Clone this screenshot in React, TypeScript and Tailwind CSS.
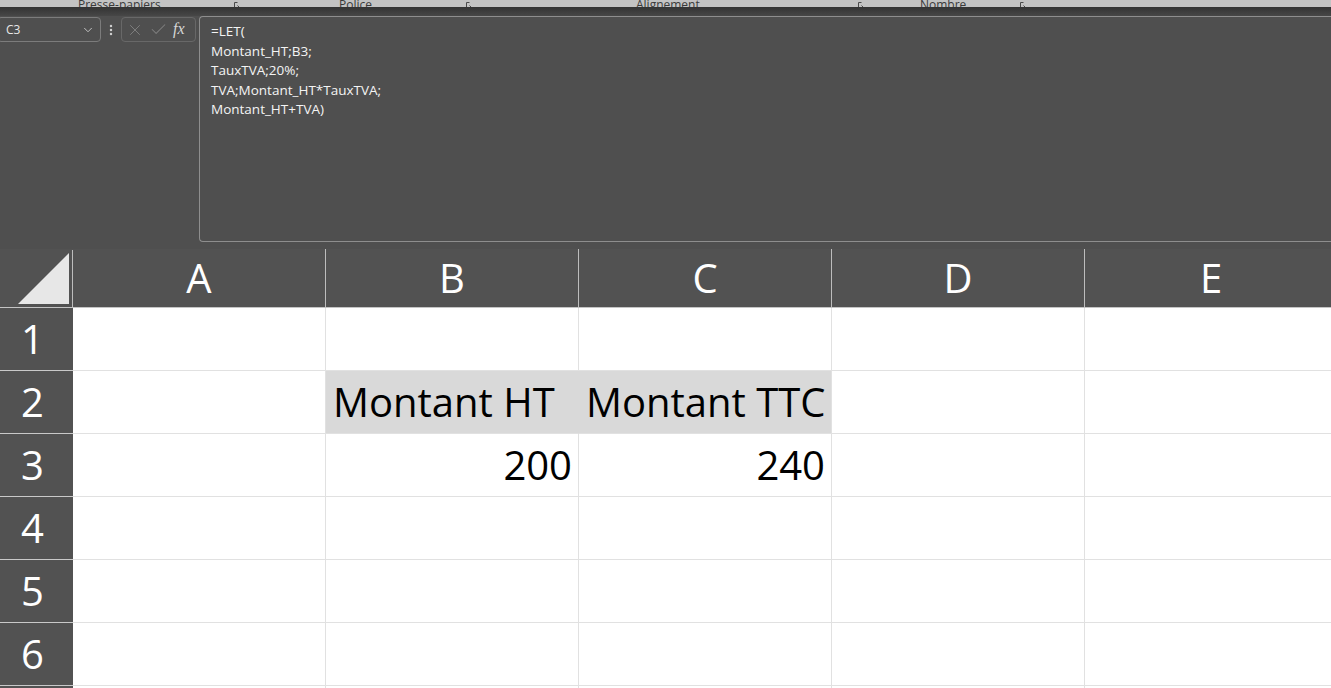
import { ChevronDown, EllipsisVertical, X, Check } from 'lucide-react';

const cols = ['A', 'B', 'C', 'D', 'E'];
const rows = [1, 2, 3, 4, 5, 6, 7];

const formula = ['=LET(', 'Montant_HT;B3;', 'TauxTVA;20%;', 'TVA;Montant_HT*TauxTVA;', 'Montant_HT+TVA)'];

// contenu des cellules
const cells: Record<string, { text: string; align: 'left' | 'right'; fill?: boolean }> = {
  B2: { text: 'Montant HT', align: 'left', fill: true },
  C2: { text: 'Montant TTC', align: 'left', fill: true },
  B3: { text: '200', align: 'right' },
  C3: { text: '240', align: 'right' },
};

function Launcher() {
  return (
    <svg width="11" height="11" viewBox="0 0 11 11" fill="none" stroke="#4a4a4a" strokeWidth="1">
      <path d="M1.5 1.5v8h8V6.5M1.5 1.5h3" />
      <path d="M4.5 4.5l4.5 4.5M9 6v3H6" />
    </svg>
  );
}

function Ribbon() {
  return (
    <div className="h-[7px] overflow-hidden bg-[#c3c3c3] flex items-end text-[12px] leading-[12px] text-[#3a3a3a] [font-family:'Open_Sans',sans-serif]">
      <span className="ml-[78px] w-[76px] shrink-0 whitespace-nowrap translate-y-[4px]">Presse-papiers</span>
      <span className="ml-[79px] shrink-0 translate-y-[5px]"><Launcher /></span>
      <span className="ml-[95px] w-[34px] shrink-0 whitespace-nowrap translate-y-[4px]">Police</span>
      <span className="ml-[92px] shrink-0 translate-y-[5px]"><Launcher /></span>
      <span className="ml-[160px] w-[62px] shrink-0 whitespace-nowrap translate-y-[4px]">Alignement</span>
      <span className="ml-[159px] shrink-0 translate-y-[5px]"><Launcher /></span>
      <span className="ml-[52px] w-[44px] shrink-0 whitespace-nowrap translate-y-[4px]">Nombre</span>
      <span className="ml-[55px] shrink-0 translate-y-[5px]"><Launcher /></span>
    </div>
  );
}

function FormulaBar() {
  return (
    <div className="flex items-start bg-[#4f4f4f] h-[233px] [font-family:'Open_Sans',sans-serif]">
      {/* zone de nom */}
      <div className="mt-[1px] -ml-[3px] w-[104px] h-[25px] shrink-0 rounded-[4px] border border-[#7c7c7c] flex items-center justify-between pl-[8px] pr-[5px]">
        <span className="text-[12px] text-[#e8e8e8]">C3</span>
        <ChevronDown size={14} color="#c9c9c9" strokeWidth={1.6} />
      </div>
      <div className="w-[20px] h-[27px] shrink-0 flex items-center justify-center">
        <EllipsisVertical size={14} color="#cfcfcf" strokeWidth={2.2} />
      </div>
      <div className="mt-[1px] w-[75px] h-[25px] shrink-0 rounded-[4px] border border-[#686868] flex items-center pl-[4px] gap-[5px]">
        <X size={18} color="#7e7e7e" strokeWidth={1.3} />
        <Check size={19} color="#7e7e7e" strokeWidth={1.3} />
        <span className="text-[16px] italic text-[#d6d6d6] [font-family:'Liberation_Serif',serif] leading-none -mt-[2px]">fx</span>
      </div>
      <div className="ml-[3px] flex-1 h-[226px] rounded-l-[4px] border border-r-0 border-[#8e8e8e] pl-[11px] pt-[5px]">
        {formula.map((line) => (
          <div key={line} className="text-[13.5px] leading-[19.5px] text-[#f4f4f4] whitespace-nowrap">
            {line}
          </div>
        ))}
      </div>
    </div>
  );
}

function Grid() {
  return (
    <div className="flex flex-col [font-family:'Open_Sans',sans-serif]">
      {/* en-têtes de colonnes */}
      <div className="flex h-[59px] shrink-0 bg-[#525252] border-b border-[#c4c4c4]">
        <div className="w-[73px] shrink-0 border-r border-[#bdbdbd] mt-[1px]">
          <svg width="72" height="57" viewBox="0 0 72 57">
            <polygon points="18,54 69,54 69,3" fill="#e7e7e7" />
          </svg>
        </div>
        {cols.map((c) => (
          <div
            key={c}
            className="w-[253px] shrink-0 border-r border-[#bdbdbd] text-center text-white text-[40px] leading-[58px]"
          >
            {c}
          </div>
        ))}
      </div>

      {rows.map((r) => (
        <div key={r} className="flex h-[63px] shrink-0">
          <div className="w-[73px] shrink-0 bg-[#525252] border-b border-[#c9c9c9] text-center pr-[8px] text-white text-[40px] leading-[62px]">
            {r}
          </div>
          {cols.map((c) => {
            const cell = cells[`${c}${r}`];
            const next = cells[`${cols[cols.indexOf(c) + 1]}${r}`];
            return (
              <div
                key={c}
                className={`w-[253px] shrink-0 border-b border-r overflow-visible whitespace-nowrap text-black text-[40px] leading-[62px] ${
                  cell?.fill ? 'bg-[#d9d9d9] border-b-[#e1e1e1]' : 'bg-white border-[#e1e1e1]'
                } ${cell?.fill && next?.fill ? 'border-r-[#d9d9d9]' : 'border-r-[#e1e1e1]'} ${
                  cell?.align === 'right' ? 'text-right pr-[6px]' : 'pl-[7px]'
                }`}
              >
                {cell?.text}
              </div>
            );
          })}
        </div>
      ))}
    </div>
  );
}

export default function App() {
  return (
    <div className="w-[1331px] h-[688px] overflow-hidden bg-[#4f4f4f]">
      <Ribbon />
      <div className="h-[9px] bg-gradient-to-b from-[#333333] to-[#474747]" />
      <FormulaBar />
      <Grid />
    </div>
  );
}
